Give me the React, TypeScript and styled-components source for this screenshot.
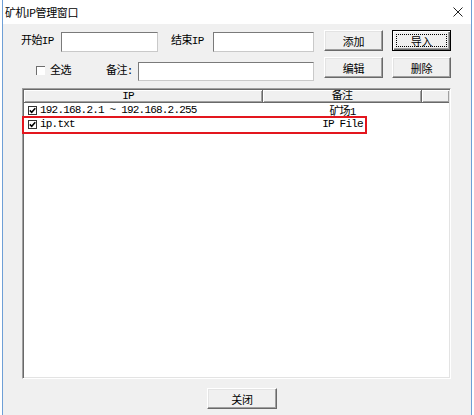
import React from 'react';
import styled, { createGlobalStyle, css } from 'styled-components';

const GlobalStyle = createGlobalStyle`
  html, body {
    margin: 0;
    padding: 0;
    background: #fff;
  }
  body {
    font-family: 'Liberation Mono', 'Noto Sans CJK SC', monospace;
    font-size: 11px;
    color: #000;
  }
`;

const Frame = styled.div`
  margin-left: 2px;
  width: 470px;
  height: 415px;
  box-sizing: border-box;
  border-left: 1px solid #6e9fd6;
  border-right: 1px solid #6e9fd6;
  background: #f0f0f0;
  display: flex;
  flex-direction: column;
  overflow: hidden;
`;

const TitleBar = styled.div`
  height: 24px;
  flex: none;
  background: #fff;
  display: flex;
  align-items: center;
  justify-content: space-between;
  padding: 0 8px 0 2px;
`;

const Title = styled.span`
  font-family: 'Noto Sans CJK SC', sans-serif;
  font-size: 11px;
  letter-spacing: -0.4px;
`;

const Body = styled.div`
  display: flex;
  flex-direction: column;
  padding-top: 6px;
`;

const FormRow = styled.div<{ $height: number; $gap?: number }>`
  display: flex;
  align-items: flex-start;
  height: ${p => p.$height}px;
  margin-top: ${p => p.$gap ?? 0}px;
`;

const Label = styled.span<{ $offset: number; $width: number; $top: number; $line: number }>`
  flex: none;
  width: ${p => p.$width}px;
  margin-left: ${p => p.$offset}px;
  margin-top: ${p => p.$top}px;
  line-height: ${p => p.$line}px;
  letter-spacing: -0.6px;
  white-space: nowrap;
`;

const TextInput = styled.input<{ $offset: number; $width: number; $top: number; $height: number }>`
  flex: none;
  box-sizing: border-box;
  width: ${p => p.$width}px;
  height: ${p => p.$height}px;
  margin: ${p => p.$top}px 0 0 ${p => p.$offset}px;
  padding: 0 2px;
  background: #fff;
  border: 1px solid;
  border-color: #7a7a7a #c9c9c9 #c9c9c9 #7a7a7a;
  font: inherit;
  outline: none;
`;

const Button = styled.button<{ $offset: number; $width: number; $focused?: boolean }>`
  flex: none;
  position: relative;
  box-sizing: border-box;
  width: ${p => p.$width}px;
  height: 21px;
  margin-left: ${p => p.$offset}px;
  padding: 0;
  background: #f0f0f0;
  border: 1px solid;
  border-color: #fff #696969 #696969 #fff;
  box-shadow: inset -1px -1px #a0a0a0, inset 1px 1px #e3e3e3;
  font-family: 'Noto Sans CJK SC', sans-serif;
  font-size: 11px;
  letter-spacing: -0.3px;
  color: #000;
  ${p => p.$focused && css`
    border-color: #000;
    box-shadow: inset 1px 1px #fff, inset -1px -1px #696969, inset -2px -2px #a0a0a0;
    &::after {
      content: '';
      position: absolute;
      inset: 3px;
      border: 1px dotted #000;
    }
  `}
`;

const SunkenBox = styled.span`
  flex: none;
  box-sizing: border-box;
  width: 9px;
  height: 9px;
  margin: 9px 0 0 33px;
  background: #fff;
  border-top: 1px solid #6d6d6d;
  border-left: 1px solid #6d6d6d;
`;

const ListBox = styled.div`
  flex: none;
  box-sizing: border-box;
  width: 429px;
  height: 291px;
  margin: 7px 0 0 19px;
  background: #fff;
  border: 1px solid;
  border-color: #a0a0a0 #fff #fff #a0a0a0;
  box-shadow: inset 1px 1px #696969, inset -1px -1px #e3e3e3;
  padding: 1px;
  display: flex;
  flex-direction: column;
`;

const Header = styled.div`
  display: flex;
  height: 13px;
  flex: none;
`;

const HeaderCell = styled.div<{ $width?: number; $shift?: number }>`
  box-sizing: border-box;
  ${p => (p.$width ? css`width: ${p.$width}px; flex: none;` : css`flex: 1;`)}
  height: 13px;
  line-height: 12px;
  padding-right: ${p => p.$shift ?? 0}px;
  text-align: center;
  background: #f0f0f0;
  border-right: 1px solid #696969;
  border-bottom: 1px solid #696969;
  box-shadow: inset 1px 1px #fff, inset -1px -1px #a0a0a0;
  letter-spacing: -0.8px;
  overflow: hidden;
  &:last-child {
    border-right: none;
  }
`;

const ListBody = styled.div`
  position: relative;
  flex: 1;
`;

const ListRow = styled.div`
  display: flex;
  align-items: center;
  height: 14px;
  letter-spacing: -0.8px;
`;

const IpCell = styled.div`
  width: 239px;
  flex: none;
  display: flex;
  align-items: center;
  padding-left: 4px;
  box-sizing: border-box;
  white-space: nowrap;
`;

const NoteCell = styled.div`
  width: 159px;
  flex: none;
  text-align: center;
  white-space: nowrap;
`;

const RowCheck = styled.span`
  box-sizing: border-box;
  width: 9px;
  height: 9px;
  margin-right: 3px;
  border: 1px solid #333;
  background: #fff;
  display: flex;
  align-items: center;
  justify-content: center;
`;

const Highlight = styled.div`
  position: absolute;
  left: -2px;
  top: 13px;
  width: 345px;
  height: 18px;
  box-sizing: border-box;
  border: 2px solid #e3161e;
  pointer-events: none;
`;

const Footer = styled.div`
  display: flex;
  margin-top: 9px;
`;

const CloseButton = styled(Button)`
  width: 70px;
  height: 21px;
`;

const rows = [
  { ip: '192.168.2.1 ~ 192.168.2.255', note: '矿场1' },
  { ip: 'ip.txt', note: 'IP File' },
];

const CheckMark = () => (
  <svg width="7" height="7" viewBox="0 0 7 7">
    <path d="M0.8 3.4 L2.7 5.3 L6.3 1.2" fill="none" stroke="#000" strokeWidth="1.5" />
  </svg>
);

export default function App() {
  return (
    <>
      <GlobalStyle />
      <Frame>
        <TitleBar>
          <Title>矿机IP管理窗口</Title>
          <svg width="10" height="10" viewBox="0 0 10 10">
            <path d="M0.5 0.5 L9.5 9.5 M9.5 0.5 L0.5 9.5" stroke="#222" strokeWidth="1" />
          </svg>
        </TitleBar>
        <Body>
          <FormRow $height={22}>
            <Label $offset={18} $width={40} $top={0} $line={22}>开始IP</Label>
            <TextInput $offset={0} $width={97} $top={2} $height={20} />
            <Label $offset={13} $width={42} $top={0} $line={22}>结束IP</Label>
            <TextInput $offset={0} $width={101} $top={2} $height={20} />
            <Button $offset={10} $width={59}>添加</Button>
            <Button $offset={9} $width={59} $focused>导入</Button>
          </FormRow>
          <FormRow $height={24} $gap={5}>
            <SunkenBox />
            <Label $offset={5} $width={56} $top={5} $line={18}>全选</Label>
            <Label $offset={0} $width={32} $top={5} $line={18}>备注:</Label>
            <TextInput $offset={0} $width={176} $top={5} $height={19} />
            <Button $offset={10} $width={59}>编辑</Button>
            <Button $offset={9} $width={59}>删除</Button>
          </FormRow>
          <ListBox>
            <Header>
              <HeaderCell $width={239} $shift={30}>IP</HeaderCell>
              <HeaderCell $width={159}>备注</HeaderCell>
              <HeaderCell />
            </Header>
            <ListBody>
              {rows.map(row => (
                <ListRow key={row.ip}>
                  <IpCell>
                    <RowCheck><CheckMark /></RowCheck>
                    {row.ip}
                  </IpCell>
                  <NoteCell>{row.note}</NoteCell>
                </ListRow>
              ))}
              <Highlight />
            </ListBody>
          </ListBox>
          <Footer>
            <CloseButton $offset={204} $width={70}>关闭</CloseButton>
          </Footer>
        </Body>
      </Frame>
    </>
  );
}
